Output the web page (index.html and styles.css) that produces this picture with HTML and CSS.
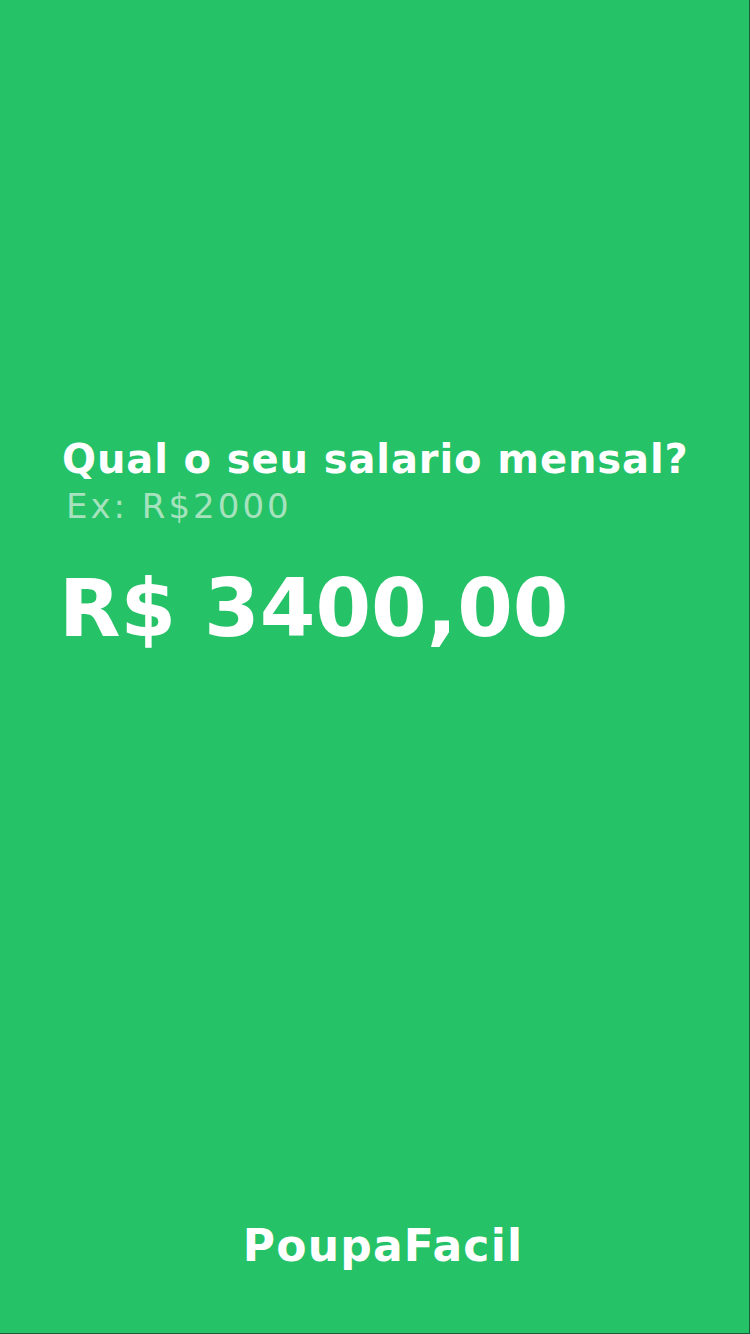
FILE: index.html
```html
<!DOCTYPE html>
<html lang="pt-BR">
<head>
<meta charset="utf-8">
<link rel="stylesheet" href="styles.css">
<title>PoupaFacil</title>
</head>
<body>
<main class="screen">
  <section class="form">
    <h1 class="question">Qual o seu salario mensal?</h1>
    <p class="hint">Ex: R$2000</p>
    <p class="amount">R$ 3400,00</p>
  </section>
  <footer class="brand">PoupaFacil</footer>
</main>
</body>
</html>
```
FILE: styles.css
```css
* { box-sizing: border-box; }
html, body { margin: 0; padding: 0; }
body {
  width: 750px;
  height: 1334px;
  background: #25c267;
  font-family: "DejaVu Sans", "Open Sans", sans-serif;
}
.screen {
  width: 750px;
  height: 1334px;
  display: flex;
  flex-direction: column;
  border-right: 1px solid #1d5a36;
  border-bottom: 1px solid #1d5a36;
  padding: 432px 0 0 0;
}
.form {
  display: flex;
  flex-direction: column;
  padding-left: 62px;
}
.question {
  margin: 0;
  color: #ffffff;
  font-weight: 700;
  font-size: 40px;
  line-height: 54px;
  letter-spacing: 0.9px;
}
.hint {
  margin: 0;
  padding-left: 4px;
  color: #a6e2bd;
  font-weight: 400;
  font-size: 34px;
  line-height: 40px;
  letter-spacing: 3px;
}
.amount {
  margin: 38px 0 0 -3px;
  color: #ffffff;
  font-weight: 700;
  font-size: 80px;
  line-height: 90px;
  letter-spacing: 0;
}
.brand {
  margin-top: auto;
  margin-bottom: 62px;
  padding-left: 17px;
  text-align: center;
  color: #ffffff;
  font-weight: 700;
  font-size: 44px;
  line-height: 50px;
  letter-spacing: 1.2px;
}
```
